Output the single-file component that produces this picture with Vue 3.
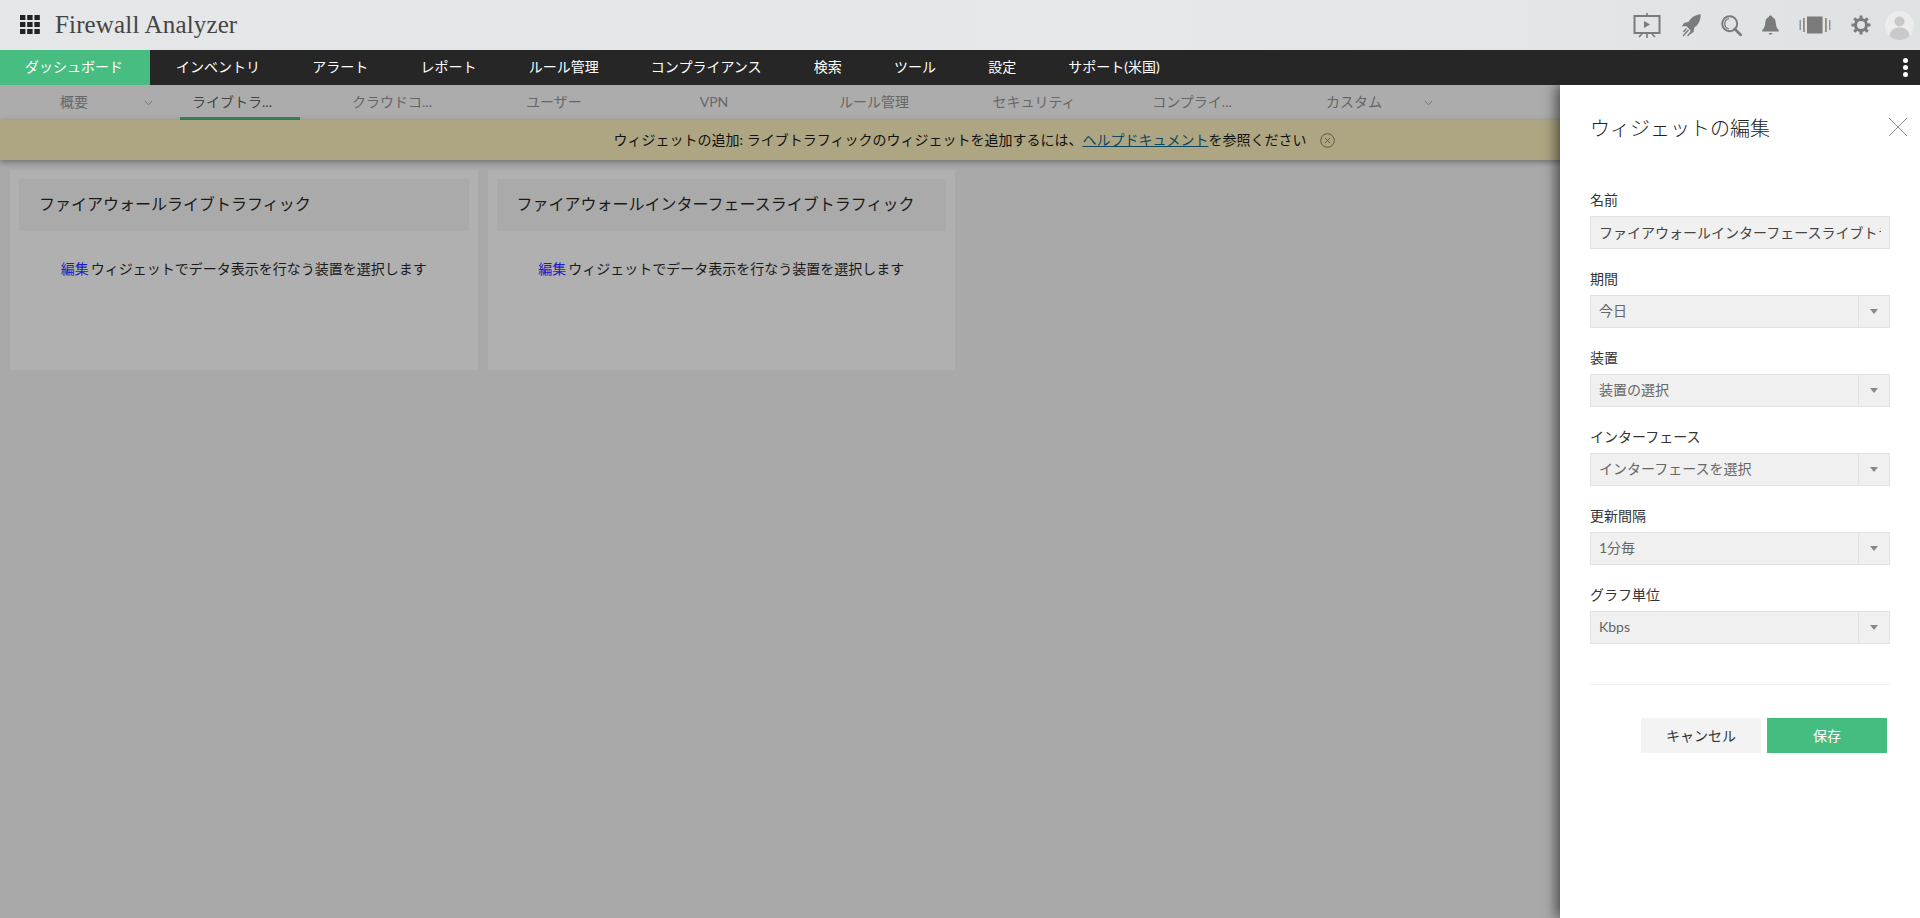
<script setup>
const navItems = ['ダッシュボード', 'インベントリ', 'アラート', 'レポート', 'ルール管理', 'コンプライアンス', '検索', 'ツール', '設定', 'サポート(米国)']
const tabs = [
  { label: '概要', chevron: true },
  { label: 'ライブトラ...', active: true, clip: true },
  { label: 'クラウドコ...', clip: true },
  { label: 'ユーザー' },
  { label: 'VPN' },
  { label: 'ルール管理' },
  { label: 'セキュリティ' },
  { label: 'コンプライ...', clip: true },
  { label: 'カスタム', chevron: true }
]
const cards = ['ファイアウォールライブトラフィック', 'ファイアウォールインターフェースライブトラフィック']
const selects = [
  { label: '期間', value: '今日' },
  { label: '装置', value: '装置の選択' },
  { label: 'インターフェース', value: 'インターフェースを選択' },
  { label: '更新間隔', value: '1分毎' },
  { label: 'グラフ単位', value: 'Kbps' }
]
</script>

<template>
  <div class="app">
    <header class="topbar">
      <svg class="grid-icon" width="20" height="19" viewBox="0 0 20 19" fill="#222">
        <rect v-for="c in 9" :key="c" :x="((c - 1) % 3) * 7.2" :y="Math.floor((c - 1) / 3) * 7" width="5.4" height="5" />
      </svg>
      <span class="brand">Firewall Analyzer</span>
      <div class="top-icons">
        <svg width="28" height="25" viewBox="0 0 28 25" fill="none" stroke="#7b7b7b">
          <path d="M1.5 3h25v17h-25z" stroke-width="2" />
          <path d="M14 0v3M14 20v5M9 21l-3 3M19 21l3 3" stroke-width="1.6" />
          <path d="M11 8l6 3.5-6 3.5z" fill="#7b7b7b" stroke="none" />
        </svg>
        <svg width="20" height="23" viewBox="0 0 20 23" fill="#7b7b7b">
          <path d="M19.700 .3C13.500 1 9.800 4 7.400 8L3.300 8.800.8 12.500l4.400-.4 4.200 4.200-.4 4.200 3.500-2.500.9-4.500c4-2.600 6.300-7 6.300-13.200z" />
          <path d="M5.500 14.500L2.500 18M7.500 16L2 22M9.500 18.500l-3 3.500" stroke="#7b7b7b" stroke-width="1.300" fill="none" />
        </svg>
        <svg width="21" height="21" viewBox="0 0 21 21" fill="none" stroke="#7b7b7b">
          <circle cx="8.700" cy="8.700" r="7.500" stroke-width="2" />
          <path d="M13.800 14l6 6" stroke-width="2.600" stroke-linecap="round" />
          <path d="M8 3.600a5.200 5.200 0 0 0 0 10.200" stroke-width="1.300" />
        </svg>
        <svg width="17" height="21" viewBox="0 0 17 21" fill="#7b7b7b">
          <path d="M8.500 0.500c1 0 1.600.7 1.700 1.600 2.600.8 3.400 3.200 3.600 6 .2 3 .8 5 3 7.200v1.200H.2v-1.200c2.200-2.200 2.800-4.200 3-7.200.2-2.800 1-5.200 3.600-6C6.900 1.200 7.500.5 8.500.5z" />
          <path d="M6.700 18h3.600a1.800 1.800 0 0 1-3.600 0z" />
        </svg>
        <svg width="32" height="18" viewBox="0 0 32 18" fill="#7b7b7b">
          <rect x="8" y="0.500" width="15.500" height="17" />
          <rect x="0.500" y="4" width="1.500" height="10" fill="#8a96a5" />
          <rect x="4" y="2" width="1.800" height="14" fill="#96897b" />
          <rect x="26" y="2" width="1.800" height="14" fill="#96897b" />
          <rect x="30" y="4" width="1.500" height="10" fill="#8a96a5" />
        </svg>
        <svg width="20" height="20" viewBox="0 0 20 20" fill="none" stroke="#7b7b7b">
          <circle cx="10" cy="10" r="5.500" stroke-width="3" />
          <path d="M10 0.500v4M10 15.500v4M.5 10h4M15.500 10h4M3.300 3.300l2.800 2.800M13.900 13.900l2.800 2.800M16.700 3.300l-2.800 2.800M6.100 13.900l-2.800 2.800" stroke-width="3" />
        </svg>
        <svg class="avatar" width="29" height="29" viewBox="0 0 29 29">
          <circle cx="14.500" cy="14.500" r="14.500" fill="#ececec" />
          <circle cx="14.500" cy="10.500" r="5" fill="#c9c9c9" />
          <path d="M4.500 25c.5-6 5-8.500 10-8.500s9.500 2.500 10 8.500a14.500 14.500 0 0 1-20 0z" fill="#c9c9c9" />
        </svg>
      </div>
    </header>

    <nav class="nav">
      <a v-for="(item, i) in navItems" :key="item" class="nav-item" :class="{ active: i === 0 }">{{ item }}</a>
      <span class="dots"><i></i><i></i><i></i></span>
    </nav>

    <main class="content">
      <div class="tabs">
        <div v-for="t in tabs" :key="t.label" class="tab" :class="{ active: t.active, clip: t.clip }">
          <span>{{ t.label }}</span>
          <svg v-if="t.chevron" class="chevron" width="9" height="6" viewBox="0 0 9 6" fill="none" stroke="#777">
            <path d="M.8.800l3.700 4 3.700-4" />
          </svg>
        </div>
      </div>

      <div class="banner">
        <span class="banner-text">ウィジェットの追加: ライブトラフィックのウィジェットを追加するには、<a class="help">ヘルプドキュメント</a>を参照ください</span>
        <svg width="15" height="15" viewBox="0 0 15 15" fill="none" stroke="#5c5a4c">
          <circle cx="7.500" cy="7.500" r="6.800" />
          <path d="M5 5l5 5M10 5l-5 5" />
        </svg>
      </div>

      <div class="cards">
        <section v-for="c in cards" :key="c" class="card">
          <h3 class="card-title">{{ c }}</h3>
          <p class="card-text"><a class="edit">編集</a> ウィジェットでデータ表示を行なう装置を選択します</p>
        </section>
      </div>
    </main>

    <aside class="drawer">
      <h2 class="drawer-title">ウィジェットの編集</h2>
      <svg class="close" width="20" height="20" viewBox="0 0 20 20" stroke="#8c8c8c" fill="none">
        <path d="M1 1l18 18M19 1L1 19" />
      </svg>

      <div class="field">
        <label>名前</label>
        <input class="text-input" readonly value="ファイアウォールインターフェースライブトラフィック" />
      </div>
      <div v-for="s in selects" :key="s.label" class="field">
        <label>{{ s.label }}</label>
        <div class="select">
          <span class="select-value">{{ s.value }}</span>
          <span class="select-arrow"><i></i></span>
        </div>
      </div>

      <div class="actions">
        <button class="btn cancel">キャンセル</button>
        <button class="btn save">保存</button>
      </div>
    </aside>
  </div>
</template>

<style scoped>
.app {
  position: relative;
  height: 918px;
  overflow: hidden;
  display: flex;
  flex-direction: column;
  background: #a9a9a9;
  font-family: Lato, "Noto Sans CJK JP", sans-serif;
  font-size: 14px;
  color: #111;
}
.topbar {
  height: 50px;
  flex: none;
  display: flex;
  align-items: center;
  background: linear-gradient(90deg, #e5e6e8, #e7e8ea 60%, #dfe2e3);
  padding-left: 20px;
}
.grid-icon { flex: none; margin-top: -1px; }
.brand {
  margin-left: 15px;
  font-family: "Liberation Serif", serif;
  font-size: 25px;
  letter-spacing: .15px;
  color: #444;
}
.top-icons {
  position: relative;
  margin-left: auto;
  display: flex;
  align-items: center;
  gap: 20px;
  padding-right: 6px;
}
.top-icons svg { flex: none; }
.avatar { margin-left: -6px; }
.nav {
  height: 35px;
  flex: none;
  display: flex;
  align-items: center;
  background: #262626;
  color: #fff;
  position: relative;
  z-index: 3;
}
.nav-item {
  height: 35px;
  line-height: 33px;
  padding: 0 26.1px;
  white-space: nowrap;
}
.nav-item.active {
  background: #47bd82;
  padding: 0 27px 0 25px;
}
.dots {
  margin-left: auto;
  margin-right: 12px;
  display: flex;
  flex-direction: column;
  gap: 2px;
}
.dots i {
  width: 5px;
  height: 5px;
  border-radius: 50%;
  background: #fff;
}
.content { flex: 1; min-height: 0; }
.tabs {
  height: 35px;
  display: flex;
  gap: 40px;
  padding-left: 20px;
  background: #acacac;
}
.tab {
  position: relative;
  width: 120px;
  padding-right: 12px;
  box-sizing: border-box;
  text-align: center;
  line-height: 33px;
  color: #666;
  white-space: nowrap;
}
.tab.clip { padding-right: 16px; }
.tab.active {
  color: #444;
  border-bottom: 3px solid #35855c;
}
.chevron {
  position: absolute;
  left: 124px;
  top: 15px;
}
.banner {
  height: 40px;
  display: flex;
  align-items: center;
  justify-content: center;
  gap: 14px;
  padding-left: 29px;
  background: #aea682;
  box-shadow: 0 2px 6px rgba(0, 0, 0, .35);
  position: relative;
}
.banner-text { padding-bottom: 2px; }
.help {
  color: #0e4760;
  text-decoration: underline;
}
.cards {
  display: flex;
  gap: 10px;
  padding: 10px 0 0 10px;
}
.card {
  width: 467.5px;
  height: 200px;
  box-sizing: border-box;
  padding: 9px;
  background: #b0b0b0;
}
.card-title {
  margin: 0;
  height: 52px;
  line-height: 50px;
  padding-left: 20px;
  border-radius: 2px;
  background: #aaaaaa;
  font-size: 16px;
  font-weight: 400;
  color: #1a1a1a;
  white-space: nowrap;
}
.card-text {
  margin: 28px 0 0;
  line-height: 20px;
  text-align: center;
  color: #1a1a1a;
  word-spacing: -1.500px;
}
.edit { color: #1c1cc4; }
.drawer {
  position: absolute;
  top: 85px;
  right: 0;
  bottom: 0;
  width: 360px;
  box-sizing: border-box;
  padding: 28px 30px 0;
  background: #fff;
  box-shadow: -4px 0 12px rgba(0, 0, 0, .55);
  z-index: 2;
}
.drawer-title {
  margin: 0 0 48px;
  font-size: 20px;
  line-height: 30px;
  font-weight: 300;
  color: #222;
}
.close {
  position: absolute;
  top: 32px;
  right: 12px;
}
.field { margin-bottom: 21px; }
.field label {
  display: block;
  height: 20px;
  line-height: 17px;
  margin-bottom: 5px;
  font-size: 14px;
  color: #333;
}
.text-input,
.select {
  width: 100%;
  height: 33px;
  box-sizing: border-box;
  background: #f0f0f0;
  border: 1px solid #e2e2e2;
  font: inherit;
  font-size: 14px;
  color: #666;
}
.text-input {
  display: block;
  padding: 0 8px 2px;
  outline: none;
  color: #444;
}
.select { display: flex; align-items: center; }
.select-value {
  flex: 1;
  padding: 0 0 3px 8px;
}
.select-arrow {
  width: 30px;
  align-self: stretch;
  display: flex;
  align-items: center;
  justify-content: center;
  border-left: 1px solid #e2e2e2;
}
.select-arrow i {
  width: 0;
  height: 0;
  border-left: 4px solid transparent;
  border-right: 4px solid transparent;
  border-top: 5px solid #888;
}
.actions {
  margin-top: 40px;
  border-top: 1px solid #eeeeee;
  padding: 33px 3px 0 0;
  display: flex;
  justify-content: flex-end;
  gap: 6px;
}
.btn {
  width: 120px;
  height: 35px;
  border: 0;
  padding: 0 0 2px;
  font: inherit;
  font-size: 14px;
}
.cancel { background: #f3f3f3; color: #333; }
.save { background: #45bd80; color: #fff; }
</style>
